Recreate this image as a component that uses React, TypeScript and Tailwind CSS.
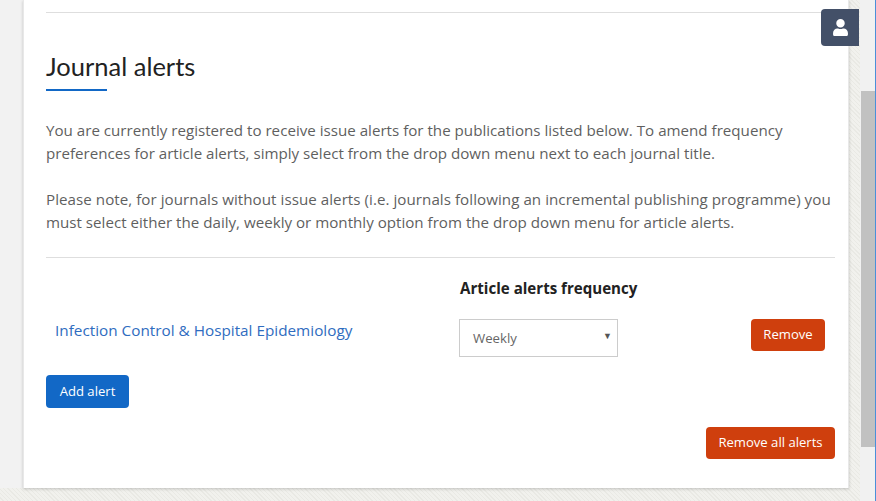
import { FaUser } from "react-icons/fa";

export default function App() {
  return (
    <div className="relative flex h-[501px] w-[876px] overflow-hidden bg-[#eeeeea] font-['Open_Sans',sans-serif]">
      {/* Page */}
      <div className="flex h-full w-[860px] shrink-0 flex-col bg-[repeating-linear-gradient(45deg,#f1f1ed_0px,#f1f1ed_2px,#e9e9e4_2px,#e9e9e4_3px)]">
        <div className="flex h-[488px] shrink-0">
          <div className="w-[23px] shrink-0 bg-[#f2f2f2]" />
          <main className="w-[826px] shrink-0 border-x border-[#e8e8e8] bg-white pl-[22px] pr-[13px] shadow-[0_1px_3px_rgba(0,0,0,0.2)]">
            <div className="mt-3 border-t border-[#dedede]" />

            <h1 className="mt-9 font-['Lato',sans-serif] text-[25.5px] leading-[34px] text-[#222222]">Journal alerts</h1>
            <div className="mt-1.5 h-0.5 w-[61px] bg-[#1268c6]" />

            <p className="mt-7 text-[15.15px] leading-[23px] text-[#5f5f5f]">
              You are currently registered to receive issue alerts for the publications listed below. To amend frequency
              <br />
              preferences for article alerts, simply select from the drop down menu next to each journal title.
            </p>
            <p className="mt-[23px] whitespace-nowrap text-[15.15px] leading-[23px] text-[#5f5f5f]">
              <span className="tracking-[0.045px]">
                Please note, for journals without issue alerts (i.e. journals following an incremental publishing programme) you
              </span>
              <br />
              must select either the daily, weekly or monthly option from the drop down menu for article alerts.
            </p>

            <div className="mt-[23px] border-t border-[#dedede]" />

            {/* Alert table */}
            <div className="flex pl-[9px] pr-[10px]">
              <a className="mt-[60px] w-[404px] shrink-0 text-[15.3px] leading-6 text-[#2f6cc0]">
                Infection Control &amp; Hospital Epidemiology
              </a>
              <div className="w-[292px] shrink-0">
                <div className="ml-px mt-[19px] text-[15.1px] font-bold leading-[22px] text-[#222222]">Article alerts frequency</div>
                <div className="mt-5 flex h-[38px] w-[159px] items-center justify-between border border-[#cccccc] pl-[13px] pr-[5px] text-[13.2px] text-[#666666]">
                  <span className="mt-px">Weekly</span>
                  <span className="mb-1 text-[9px] text-[#555555]">▼</span>
                </div>
              </div>
              <div className="mt-[61px] flex h-8 w-[74px] items-center justify-center rounded bg-[#cf3f0d] text-[13.1px] text-white">
                Remove
              </div>
            </div>

            <div className="mt-[18px] flex h-[33px] w-[83px] items-center justify-center rounded bg-[#1268c6] text-[13.1px] text-white">
              Add alert
            </div>

            <div className="mt-[19px] flex justify-end">
              <div className="flex h-8 w-[129px] items-center justify-center rounded bg-[#cf3f0d] text-[13.1px] text-white">
                Remove all alerts
              </div>
            </div>
          </main>
        </div>
      </div>

      {/* Scrollbar */}
      <div className="h-full w-4 shrink-0 border-r border-[#4a90d9] bg-[#f1f1f1] pl-px pt-[91px]">
        <div className="h-[356px] w-[14px] bg-[#c1c1c1]" />
      </div>

      {/* User tab */}
      <div className="absolute left-[821px] top-[9px] flex h-[37px] w-[38px] items-center justify-center rounded-l bg-[#435068] text-white">
        <FaUser className="h-[17px] w-[15px]" />
      </div>
    </div>
  );
}
